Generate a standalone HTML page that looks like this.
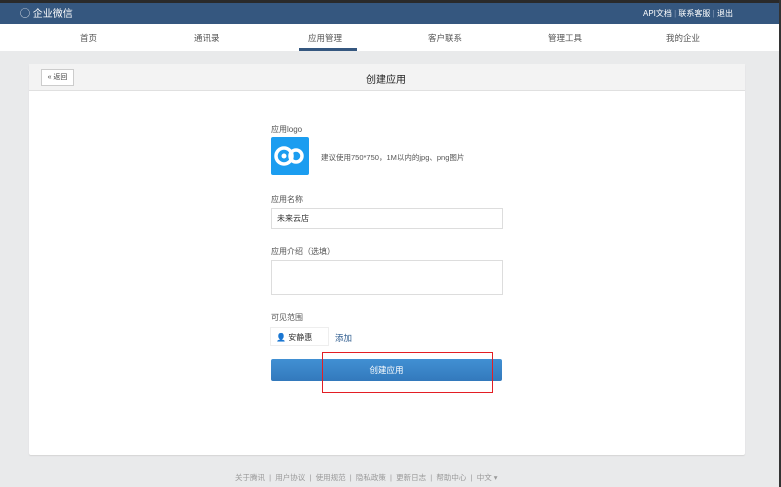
<html><head><style>
body{margin:0;width:781px;height:487px;background:#e9eaeb;font-family:"Liberation Sans","Noto Sans CJK SC",sans-serif;position:relative;overflow:hidden;font-size:8px;color:#333}
.a{position:absolute}
</style></head><body>
<div class="a" style="left:0;top:0;width:781px;height:3px;background:#2a2a2a"></div>
<div class="a" style="left:0;top:3px;width:781px;height:21px;background:#35577f"></div>
<div class="a" style="left:779px;top:0;width:2px;height:487px;background:#333"></div>
<div class="a" style="left:20px;top:5px;color:#fff;font-size:10px">◯ 企业微信</div>
<div class="a" style="left:643px;top:8px;color:#fff;font-size:8px">API文档 <span style="color:#7f97b5">|</span> 联系客服 <span style="color:#7f97b5">|</span> 退出</div>
<div class="a" style="left:0;top:24px;width:779px;height:27px;background:#fff"></div>
<div class="a" style="left:80px;top:32px;font-size:8.5px;color:#555">首页</div>
<div class="a" style="left:194px;top:32px;font-size:8.5px;color:#555">通讯录</div>
<div class="a" style="left:308px;top:32px;font-size:8.5px;color:#555">应用管理</div>
<div class="a" style="left:428px;top:32px;font-size:8.5px;color:#555">客户联系</div>
<div class="a" style="left:548px;top:32px;font-size:8.5px;color:#555">管理工具</div>
<div class="a" style="left:666px;top:32px;font-size:8.5px;color:#555">我的企业</div>
<div class="a" style="left:299px;top:48px;width:58px;height:3px;background:#35577f"></div>
<div class="a" style="left:29px;top:64px;width:716px;height:391px;background:#fff;border-radius:2px;box-shadow:0 1px 1px #d5d5d5"></div>
<div class="a" style="left:29px;top:64px;width:716px;height:26px;background:#f3f3f3;border-bottom:1px solid #e0e0e0"></div>
<div class="a" style="left:41px;top:69px;width:31px;height:15px;border:1px solid #ccc;background:#fff;font-size:7px;line-height:15px;text-align:center;color:#444">« 返回</div>
<div class="a" style="left:366px;top:71px;font-size:10px;color:#222">创建应用</div>
<div class="a" style="left:271px;top:124px;color:#555">应用logo</div>
<div class="a" style="left:271px;top:137px;width:38px;height:38px;background:#1b9df0;border-radius:2px">
<svg width="38" height="38"><circle cx="13" cy="19" r="8" fill="none" stroke="#fff" stroke-width="3.5"/><circle cx="13" cy="19" r="2.5" fill="#fff"/><circle cx="25" cy="19" r="6" fill="none" stroke="#fff" stroke-width="3.5"/></svg></div>
<div class="a" style="left:321px;top:152px;color:#555;font-size:7.5px">建议使用750*750，1M以内的jpg、png图片</div>
<div class="a" style="left:271px;top:194px;color:#555">应用名称</div>
<div class="a" style="left:271px;top:208px;width:230px;height:19px;border:1px solid #ddd;background:#fff"></div>
<div class="a" style="left:277px;top:213px;color:#333">未来云店</div>
<div class="a" style="left:271px;top:246px;color:#555">应用介绍（选填）</div>
<div class="a" style="left:271px;top:260px;width:230px;height:33px;border:1px solid #ddd;background:#fff"></div>
<div class="a" style="left:271px;top:312px;color:#555">可见范围</div>
<div class="a" style="left:271px;top:328px;width:57px;height:17px;background:#fff;box-shadow:0 0 0 1px #eee"></div>
<div class="a" style="left:276px;top:332px;color:#333"><span style="color:#4a88c7">👤</span> 安静惠</div>
<div class="a" style="left:335px;top:332px;color:#2d5b8e;font-size:8.5px">添加</div>
<div class="a" style="left:271px;top:359px;width:231px;height:22px;background:linear-gradient(#4190d3,#3379bc);border-radius:2px;color:#fff;text-align:center;line-height:22px;font-size:8.5px">创建应用</div>
<div class="a" style="left:322px;top:352px;width:169px;height:39px;border:1px solid #e31e24"></div>
<div class="a" style="left:235px;top:472px;color:#999;font-size:7.5px">关于腾讯 &nbsp;|&nbsp; 用户协议 &nbsp;|&nbsp; 使用规范 &nbsp;|&nbsp; 隐私政策 &nbsp;|&nbsp; 更新日志 &nbsp;|&nbsp; 帮助中心 &nbsp;|&nbsp; 中文 ▾</div>
</body></html>
